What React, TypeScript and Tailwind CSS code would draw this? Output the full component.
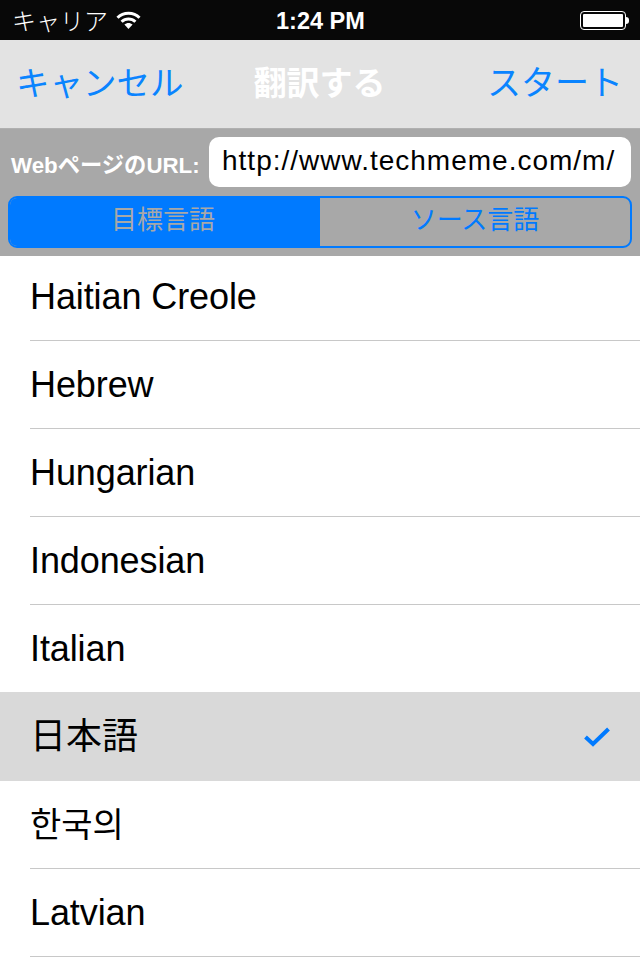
const FONT = "font-['Liberation_Sans','Noto_Sans_CJK_JP',sans-serif]";

const languages = [
  { name: 'Haitian Creole' },
  { name: 'Hebrew' },
  { name: 'Hungarian' },
  { name: 'Indonesian' },
  { name: 'Italian' },
  { name: '日本語', selected: true },
  { name: '한국의', korean: true },
  { name: 'Latvian' },
];

function WifiIcon() {
  return (
    <svg width="25" height="18" viewBox="0 0 25 18" fill="none">
      <path d="M1.5 6.8 C7.5 0.6 17.5 0.6 23.5 6.8" stroke="white" strokeWidth="3" />
      <path d="M5.6 10.8 C9.5 7 15.5 7 19.4 10.8" stroke="white" strokeWidth="3" />
      <path d="M8.4 13.6 C10.8 11.4 14.2 11.4 16.6 13.6 L12.5 18 Z" fill="white" />
    </svg>
  );
}

function StatusBar() {
  return (
    <div className="relative h-10 bg-[#080808] text-white flex items-center justify-between pl-[12px] pr-[11px]">
      <div className="flex items-center gap-[8px]">
        <span className="text-[24px] leading-none font-['Noto_Sans_CJK_JP',sans-serif] font-light">キャリア</span>
        <WifiIcon />
      </div>
      <span className="absolute left-[276px] top-[8px] text-[23.5px] leading-[26px] font-bold">1:24 PM</span>
      <div className="flex items-center">
        <div className="w-[46px] h-[19px] rounded-[4px] border border-white p-[2px]">
          <div className="w-full h-full rounded-[1px] bg-white" />
        </div>
        <div className="w-[3px] h-[7px] bg-white rounded-r-sm" />
      </div>
    </div>
  );
}

function NavBar() {
  return (
    <div className="h-[89px] bg-[#e3e3e3] border-b border-[#b0b0b0] flex items-center pl-[16px] pr-[17px] pb-[6px] font-['Noto_Sans_CJK_JP',sans-serif]">
      <span className="flex-1 text-[33.5px] leading-none text-[#0a84ff]">キャンセル</span>
      <span className="text-[33px] leading-none text-white font-bold">翻訳する</span>
      <span className="flex-1 text-right text-[34px] leading-none text-[#0a84ff]">スタート</span>
    </div>
  );
}

function UrlPanel() {
  return (
    <div className="relative z-10 h-[127px] bg-[#a8a8a8] px-2 pt-2">
      <div className="flex items-center h-[50px]">
        <span className="w-[201px] pl-[3px] pt-[8px] text-[22.3px] leading-none text-white font-bold whitespace-nowrap">WebページのURL:</span>
        <div className="w-[422px] h-[50px] rounded-[10px] bg-white flex items-center pl-[13px] pb-[3px] text-[28px] tracking-[1px] text-black whitespace-nowrap overflow-hidden">
          http://www.techmeme.com/m/
        </div>
      </div>
      <div className="mt-[9px] h-[52px] flex rounded-[9px] overflow-hidden border-2 border-[#007aff] text-[26px] font-['Noto_Sans_CJK_JP',sans-serif]">
        <div className="w-[310px] bg-[#007aff] text-[#a8a8a8] flex items-center justify-center pb-[10px] pr-[4px]">目標言語</div>
        <div className="flex-1 text-[#007aff] flex items-center justify-center pb-[10px]">ソース言語</div>
      </div>
    </div>
  );
}

function CheckMark() {
  return (
    <svg width="28" height="22" viewBox="0 0 28 22" fill="none">
      <path d="M2.5 11 L10 18 L25.5 3" stroke="#007aff" strokeWidth="4" />
    </svg>
  );
}

export default function App() {
  return (
    <div className={`w-[640px] h-[960px] overflow-hidden bg-white ${FONT}`}>
      <StatusBar />
      <NavBar />
      <UrlPanel />
      <ul className="-mt-[3px]">
        {languages.map((lang) => (
          <li
            key={lang.name}
            className={
              lang.selected
                ? 'relative h-[89px] -mt-px pl-[30px] flex bg-[#d9d9d9]'
                : 'h-[88px] pl-[30px] flex'
            }
          >
            <div
              className={`flex-1 flex items-center justify-between pr-[29px] text-black ${
                lang.selected
                  ? "text-[36px] font-['Noto_Sans_CJK_JP',sans-serif]"
                  : lang.korean
                    ? "text-[34px] pb-[4px] border-b border-[#c8c8c8] font-['Noto_Sans_CJK_KR',sans-serif]"
                    : 'text-[36px] tracking-[-0.1px] border-b border-[#c8c8c8]'
              }`}
            >
              <span className={lang.selected ? 'pb-[7px]' : ''}>{lang.name}</span>
              {lang.selected && <CheckMark />}
            </div>
          </li>
        ))}
      </ul>
    </div>
  );
}
